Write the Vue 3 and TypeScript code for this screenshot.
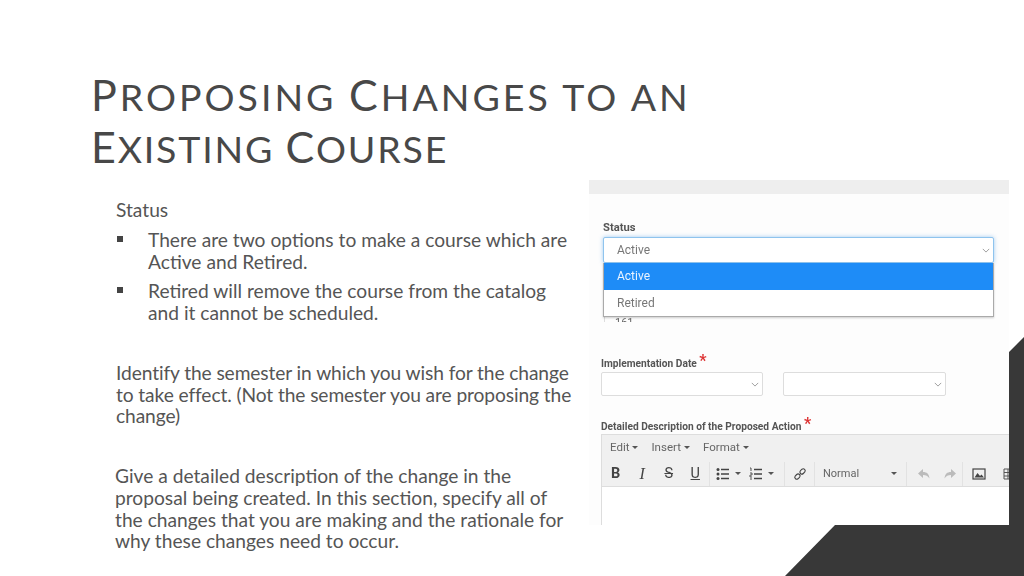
<script setup lang="ts">
const menus: string[] = ['Edit', 'Insert', 'Format']
</script>

<template>
  <div class="slide">
    <h1 class="title">
      <span class="line"><span class="cap">P</span>roposing <span class="cap">C</span>hanges to an</span>
      <span class="line second"><span class="cap">E</span>xisting <span class="cap">C</span>ourse</span>
    </h1>
    <div class="content">
      <div class="text">
        <p class="status">Status</p>
        <ul class="bullets">
          <li>There are two options to make a course which are<br />Active and Retired.</li>
          <li>Retired will remove the course from the catalog<br />and it cannot be scheduled.</li>
        </ul>
        <p class="para one">Identify the semester in which you wish for the change<br />to take effect. (Not the semester you are proposing the<br />change)</p>
        <p class="para two">Give a detailed description of the change in the<br />proposal being created. In this section, specify all of<br />the changes that you are making and the rationale for<br />why these changes need to occur.</p>
      </div>
      <div class="shot">
        <div class="topbar"></div>
        <section class="status-form">
          <div class="label big">Status</div>
          <div class="select focus"><span>Active</span>
            <svg class="chev" viewBox="0 0 10 6"><path d="M1 1l4 4 4-4" /></svg>
          </div>
          <div class="menu">
            <div class="opt on">Active</div>
            <div class="opt">Retired</div>
          </div>
          <div class="peek"><span>161</span></div>
        </section>
        <section class="dates">
          <div class="label">Implementation Date <b>*</b></div>
          <div class="date-row">
            <div class="select small"><svg class="chev" viewBox="0 0 10 6"><path d="M1 1l4 4 4-4" /></svg></div>
            <div class="select small"><svg class="chev" viewBox="0 0 10 6"><path d="M1 1l4 4 4-4" /></svg></div>
          </div>
        </section>
        <section class="detail">
          <div class="label">Detailed Description of the Proposed Action <b>*</b></div>
          <div class="editor">
            <div class="menus">
              <span v-for="m in menus" :key="m">{{ m }}<i class="caret"></i></span>
            </div>
            <div class="tools">
              <span class="group g1">
                <b class="t-b">B</b><em class="t-i">I</em><s class="t-s">S</s><u class="t-u">U</u>
              </span>
              <span class="group g2">
                <svg class="ico" viewBox="0 0 14 14"><circle cx="2" cy="2.5" r="1.5" /><circle cx="2" cy="7" r="1.5" /><circle cx="2" cy="11.5" r="1.5" /><path class="ln" d="M5 2.5h8M5 7h8M5 11.5h8" /></svg>
                <i class="caret"></i>
                <svg class="ico" viewBox="0 0 14 14"><path class="thin" d="M1 1h1v3M1 6h2v2H1v2h2M1 12h2" /><path class="ln" d="M5 2.5h8M5 7h8M5 11.5h8" /></svg>
                <i class="caret"></i>
              </span>
              <span class="group g3">
                <svg class="ico" viewBox="0 0 14 14"><path class="chain" d="M7.5 6.500a2 2 0 0 1 0-2.800l1.500-1.500a2 2 0 0 1 2.800 2.800l-1.500 1.500a2 2 0 0 1-2.800 0zM3.700 7.500l-1.500 1.500a2 2 0 0 0 2.800 2.800l1.500-1.500a2 2 0 0 0 0-2.800 2 2 0 0 0-2.800 0z" /></svg>
              </span>
              <span class="group g4">Normal<i class="caret"></i></span>
              <span class="group g5">
                <svg class="ico faint" viewBox="0 0 14 14"><path d="M6 2L1 6.500 6 11V8c3 0 5 1 6.500 3.500C12 7 10 5 6 5z" /></svg>
                <svg class="ico faint" viewBox="0 0 14 14"><path d="M8 2l5 4.500L8 11V8c-3 0-5 1-6.500 3.500C2 7 4 5 8 5z" /></svg>
              </span>
              <span class="group g6">
                <svg class="ico" viewBox="0 0 14 14"><rect x="1" y="2" width="12" height="10" fill="none" stroke="#444" stroke-width="1.200" /><path d="M2.500 10.500l3-4.500 2.500 3 1.500-1.500 2.500 3z" /></svg>
                <svg class="ico gridico" viewBox="0 0 14 14"><path class="thin" d="M1 2h12v10H1zM1 5.500h12M1 9h12M5 2v10M9 2v10" /></svg>
              </span>
            </div>
            <div class="body"></div>
          </div>
        </section>
      </div>
    </div>
    <svg class="corner" viewBox="0 0 239 239" aria-hidden="true">
      <path d="M239 0L224 15V188H50L0 239H239Z" />
    </svg>
  </div>
</template>

<style>
html, body { margin: 0; background: #fff; }
</style>

<style scoped>
.slide {
  position: relative;
  width: 1024px;
  height: 576px;
  overflow: hidden;
  background: #fff;
  color: #404040;
  font-family: "Lato", "Open Sans", sans-serif;
}
.title {
  box-sizing: border-box;
  margin: 0;
  padding: 71px 0 0 91px;
  height: 180px;
  font-family: "Lato", sans-serif;
  font-weight: 400;
  font-size: 37.500px;
  line-height: 52px;
  text-transform: uppercase;
  letter-spacing: 3px;
  color: #484848;
  white-space: nowrap;
}
.line { display: block; height: 52px; }
.line.second { letter-spacing: 1.800px; }
.cap { font-size: 43px; line-height: 1; }
.content {
  display: flex;
  align-items: flex-start;
}
.text {
  box-sizing: border-box;
  width: 589px;
  padding: 19px 0 0 116px;
  font-size: 19.200px;
  font-weight: 400;
  line-height: 21.600px;
  white-space: nowrap;
  color: #555;
}
.text p { margin: 0; }
.bullets {
  list-style: none;
  margin: 8px 0 0;
  padding: 0 0 0 32px;
}
.bullets li { position: relative; margin-bottom: 7.500px; line-height: 22px; }
.bullets li::before {
  content: "";
  position: absolute;
  left: -31px;
  top: 7px;
  width: 6px;
  height: 6px;
  background: #444;
}
.para.one { margin-top: 38px; letter-spacing: -0.1px; }
.para.two { margin-top: 38.500px; margin-left: -1px; }

.shot {
  width: 420px;
  height: 345px;
  background: #fdfdfd;
  font-family: "Roboto", "Liberation Sans", sans-serif;
  overflow: hidden;
  filter: blur(0.35px);
}
.topbar { height: 14px; background: #eeeeee; }
.label {
  font-size: 10.200px;
  font-weight: 700;
  color: #555;
  line-height: 14px;
  white-space: nowrap;
}
.label.big { font-size: 11.200px; }
.label b {
  position: relative;
  top: -1px;
  color: #d33;
  font-size: 16px;
  line-height: 10px;
  font-weight: 700;
}
.status-form { padding: 27px 15px 0 14px; height: 116px; background: #fdfdfd; }
.select {
  position: relative;
  box-sizing: border-box;
  background: #fff;
  border: 1px solid #ddd;
  border-radius: 2px;
}
.select.focus {
  height: 26px;
  margin-top: 2px;
  padding: 0 13px;
  line-height: 24px;
  font-size: 12px;
  color: #777;
  border-color: #8fc4ee;
  box-shadow: 0 0 4px rgba(100, 170, 235, 0.6);
}
.chev {
  position: absolute;
  right: 3px;
  top: 50%;
  width: 8px;
  height: 5px;
  margin-top: -2px;
  fill: none;
  stroke: #888;
  stroke-width: 1;
}
.menu {
  position: relative;
  border: 1px solid #aaa;
  border-top: none;
  box-shadow: 0 1px 2px rgba(0, 0, 0, 0.2);
  background: #fff;
  z-index: 1;
}
.opt {
  height: 26px;
  padding: 0 13px;
  line-height: 26px;
  font-size: 12px;
  color: #777;
}
.opt.on { height: 27px; background: #1e8cf7; color: #eaf4ff; }
.peek {
  height: 5px;
  margin: 0 1px;
  padding-left: 10px;
  overflow: hidden;
  border-left: 1px solid #ddd;
  font-size: 11px;
  line-height: 11px;
  color: #666;
}
.dates { padding: 20px 0 0 12px; }
.date-row { display: flex; gap: 20px; margin-top: 1px; }
.select.small { width: 162px; height: 24px; }
.select.small + .select.small { width: 163px; }
.select.small .chev { right: 3px; }
.detail { padding: 24px 0 0 12px; }
.editor {
  width: 430px;
  box-sizing: border-box;
  border: 1px solid #ddd;
  border-bottom: none;
}
.menus {
  display: flex;
  gap: 13px;
  height: 26px;
  padding-left: 8px;
  background: #f0f0f0;
  font-size: 11.500px;
  line-height: 24px;
  color: #666;
}
.caret {
  display: inline-block;
  margin-left: 3px;
  vertical-align: middle;
  border-left: 3px solid transparent;
  border-right: 3px solid transparent;
  border-top: 3px solid #555;
}
.tools {
  display: flex;
  align-items: center;
  height: 25px;
  background: #f0f0f0;
  border-bottom: 1px solid #ddd;
  font-size: 11px;
  color: #666;
}
.group {
  display: flex;
  align-items: center;
  box-sizing: border-box;
  height: 24px;
  border-right: 1px solid #e2e2e2;
}
.g1 { width: 108px; padding-left: 0.5px; font-size: 14.500px; color: #444; }
.g1 > * { width: 26.500px; text-align: center; }
.t-b { font-weight: 700; }
.t-i { font-family: "Liberation Serif", serif; font-size: 16px; }
.t-s, .t-u { font-weight: 400; }
.g2 { width: 75px; padding-left: 6px; }
.g2 .caret { margin: 0 8px 0 5px; }
.g3 { width: 30px; padding-left: 8px; }
.g4 { width: 92px; padding-left: 8px; justify-content: space-between; padding-right: 9px; }
.g5 { width: 56px; padding-left: 10px; gap: 12px; }
.g6 { padding-left: 9px; gap: 17px; border-right: none; }
.ico { width: 14px; height: 14px; flex: none; fill: #444; }
.ico.faint { fill: #bbb; }
.ln { fill: none; stroke: #444; stroke-width: 1.500; }
.thin { fill: none; stroke: #555; stroke-width: 1; }
.chain { fill: none; stroke: #444; stroke-width: 1.100; }
.body { height: 80px; background: #fff; }
.corner {
  position: absolute;
  right: 0;
  bottom: 0;
  width: 239px;
  height: 239px;
  fill: #383838;
}
</style>
